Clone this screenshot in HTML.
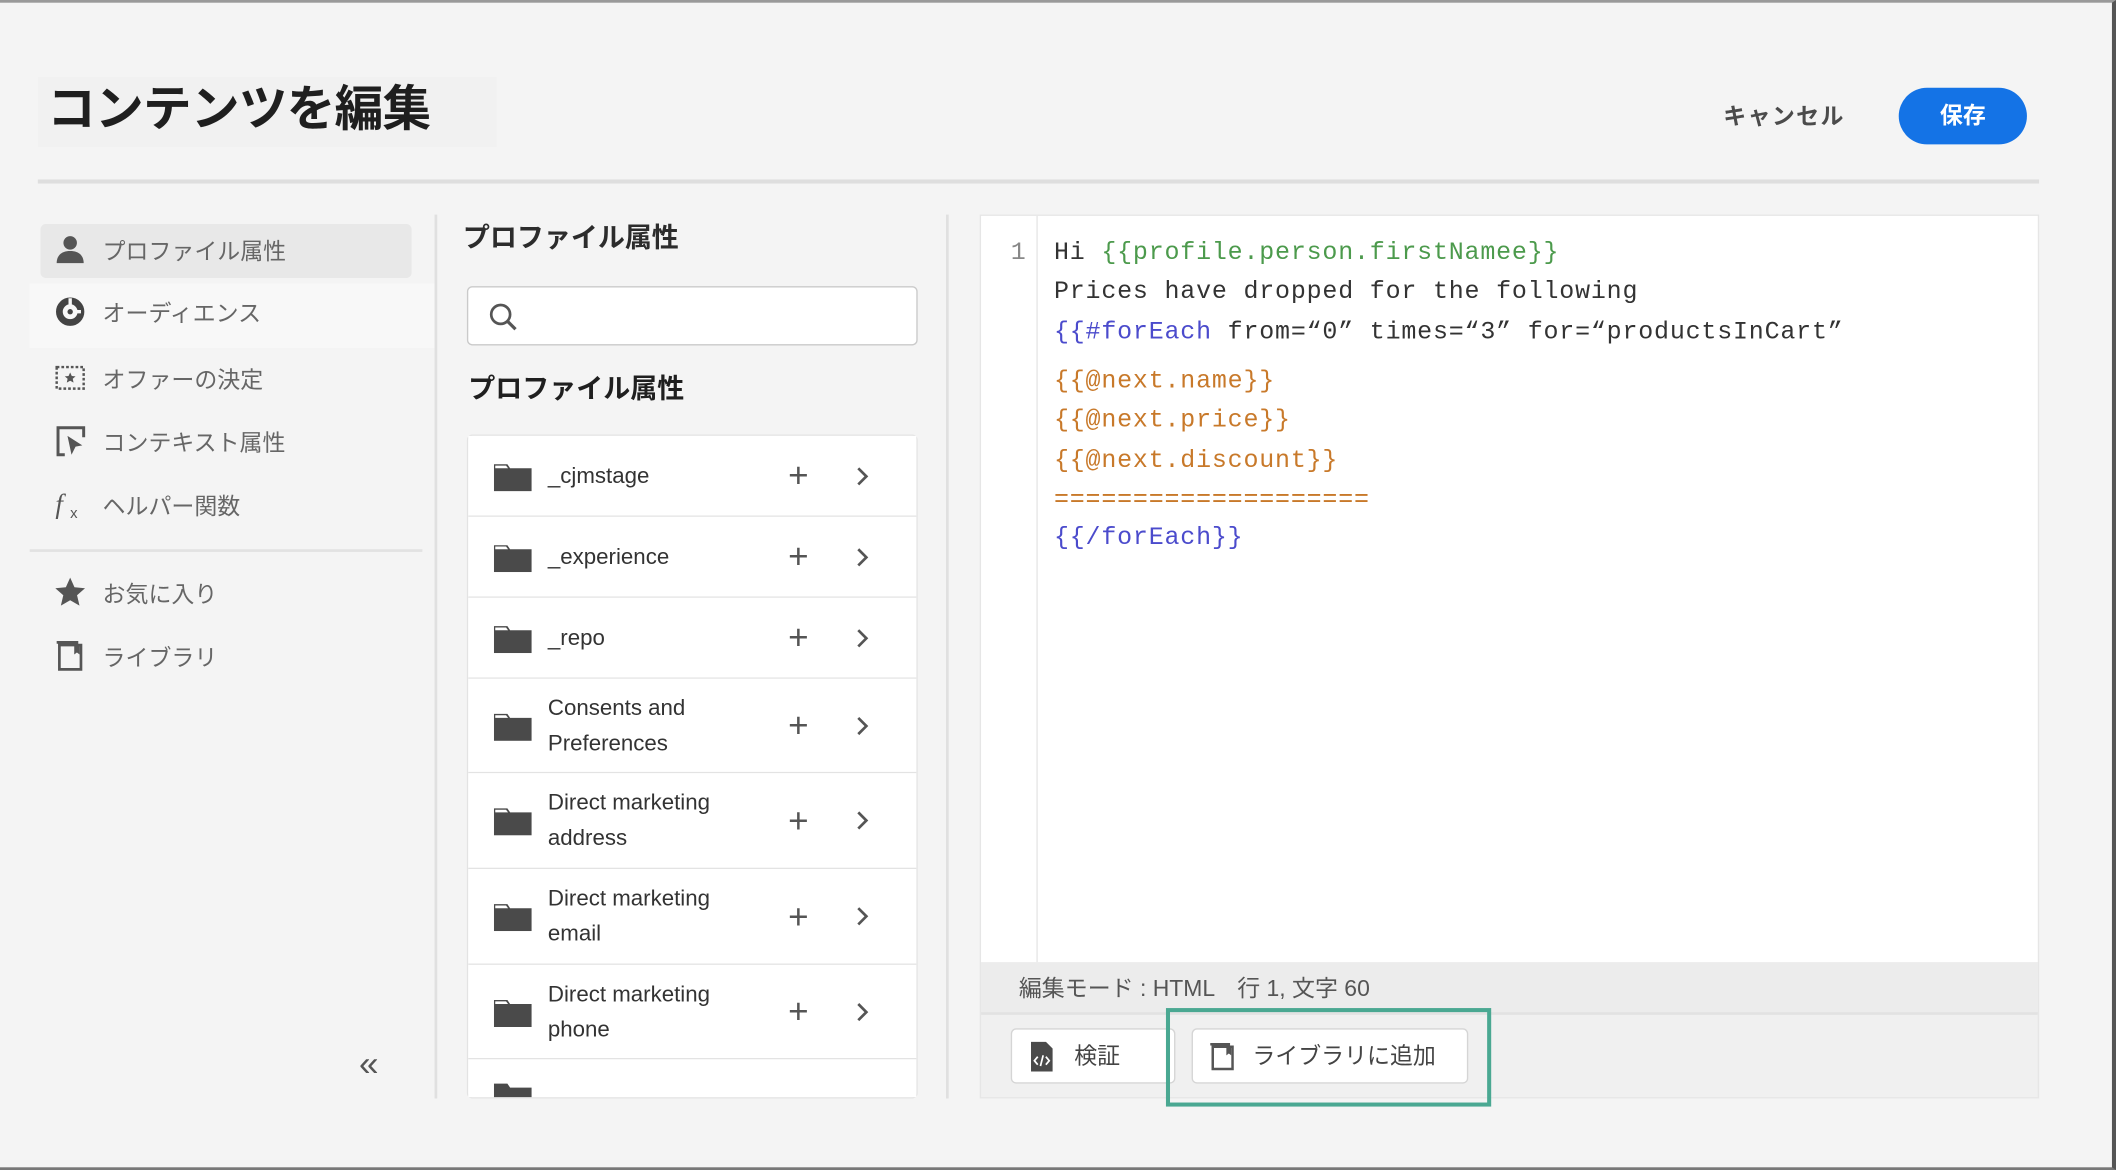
<!DOCTYPE html>
<html><head><meta charset="utf-8"><style>
*{box-sizing:border-box;margin:0;padding:0}
html,body{width:2116px;height:1170px;overflow:hidden;background:#f4f4f4}
#s{position:absolute;left:0;top:0;width:1568px;height:867px;transform:scale(1.34949,1.34948);transform-origin:0 0;font-family:"Liberation Sans","Noto Sans CJK JP",sans-serif;color:#333;border-top:2px solid #999;border-right:3px solid #555;border-bottom:2px solid #777;background:#f4f4f4}
.a{position:absolute}
.nav{position:absolute;left:40px;font-size:17px;color:#666;display:flex;align-items:center;gap:12px}
.nav svg{width:24px;height:24px}
.row{position:absolute;left:347px;width:332px;background:#fff;border-bottom:1.5px solid #e3e3e3;display:flex;align-items:center}
.row .fd{position:absolute;left:19px;width:28px;height:22px}
.row .t{position:absolute;left:59px;font-size:16.5px;line-height:26px;color:#333}
.row .p{position:absolute;left:237px;font-size:26px;color:#555;font-weight:300}
.row .c{position:absolute;left:287px;width:10px;height:16px}
.code{position:absolute;left:781px;font-family:"Liberation Mono","Noto Sans CJK JP",monospace;font-size:18.5px;color:#333;white-space:pre;letter-spacing:0.6px}
.g{color:#4c9a4c}.b{color:#4b4bcc}.o{color:#c8792a}
</style></head><body><div id="s">
<div class="a" style="left:28px;top:55px;width:340px;height:52px;background:#f1f1f1"></div>
<div class="a" style="left:35px;top:50px;font-size:36px;font-weight:bold;color:#1f1f1f;letter-spacing:-0.5px">コンテンツを編集</div>
<div class="a" style="left:1277px;top:70px;font-size:17px;font-weight:bold;color:#4b4b4b;letter-spacing:1px">キャンセル</div>
<div class="a" style="left:1407px;top:63px;width:95px;height:42px;border-radius:21px;background:#1473e6;color:#fff;font-weight:bold;font-size:17px;text-align:center;line-height:42px">保存</div>
<div class="a" style="left:28px;top:131px;width:1483px;height:3px;background:#dedede"></div>

<div class="a" style="left:30px;top:164px;width:275px;height:40px;background:#e8e8e8;border-radius:4px"></div>
<div class="a" style="left:22px;top:208px;width:300px;height:48px;background:#f8f8f8"></div>
<div class="nav" style="top:170px"><svg viewBox="0 0 24 24"><circle cx="12" cy="7" r="5" fill="#555"/><path d="M2 22c0-6 4-9 10-9s10 3 10 9z" fill="#555"/></svg>プロファイル属性</div>
<div class="nav" style="top:216px"><svg viewBox="0 0 24 24"><circle cx="12" cy="12" r="8" fill="none" stroke="#444" stroke-width="5"/><circle cx="12" cy="12" r="2" fill="#444"/><path d="M12 2v6M20 12h-5" stroke="#f8f8f8" stroke-width="2.5"/></svg>オーディエンス</div>
<div class="nav" style="top:265px"><svg viewBox="0 0 24 24"><rect x="2" y="4" width="20" height="16" fill="none" stroke="#555" stroke-width="1.8" stroke-dasharray="2 1.5"/><path d="M12 8l1.2 2.6 2.8.3-2.1 1.8.6 2.8-2.5-1.4-2.5 1.4.6-2.8-2.1-1.8 2.8-.3z" fill="#555"/></svg>オファーの決定</div>
<div class="nav" style="top:312px"><svg viewBox="0 0 24 24"><path d="M8 22H3V2h19v7" fill="none" stroke="#555" stroke-width="2.2"/><path d="M10 8l11 7-5 1-3 6z" fill="#555"/></svg>コンテキスト属性</div>
<div class="nav" style="top:359px"><svg viewBox="0 0 24 24"><text x="1" y="18" font-family="Liberation Serif,serif" font-style="italic" font-size="20" fill="#555">f</text><text x="12" y="22" font-family="Liberation Sans,sans-serif" font-size="11" fill="#555">x</text></svg>ヘルパー関数</div>
<div class="a" style="left:22px;top:405px;width:291px;height:2px;background:#e2e2e2"></div>
<div class="nav" style="top:424px"><svg viewBox="0 0 24 24"><path d="M12 1l3.2 7.2 7.8.7-5.9 5.2 1.8 7.7L12 17.8 5.1 21.8l1.8-7.7L1 8.9l7.8-.7z" fill="#555"/></svg>お気に入り</div>
<div class="nav" style="top:471px"><svg viewBox="0 0 24 24"><path d="M4 4h16v18H4z M2 2h16" fill="none" stroke="#555" stroke-width="2"/><path d="M15 4v7l2-1.5 2 1.5V4" fill="#555"/></svg>ライブラリ</div>
<div class="a" style="left:266px;top:771px;font-size:26px;color:#555">«</div>

<div class="a" style="left:322px;top:157px;width:2px;height:655px;background:#e0e0e0"></div>
<div class="a" style="left:701px;top:157px;width:2px;height:655px;background:#e0e0e0"></div>
<div class="a" style="left:343px;top:158px;font-size:20px;font-weight:bold;color:#2c2c2c">プロファイル属性</div>
<div class="a" style="left:346px;top:210px;width:334px;height:44px;background:#fff;border:1px solid #cacaca;border-radius:4px"><svg class="a" style="left:14px;top:10px" width="24" height="24" viewBox="0 0 24 24"><circle cx="10" cy="10" r="7" fill="none" stroke="#555" stroke-width="2"/><path d="M15 15l6 6" stroke="#555" stroke-width="2.4"/></svg></div>
<div class="a" style="left:347px;top:270px;font-size:20px;font-weight:bold;color:#1f1f1f">プロファイル属性</div>
<div class="a" style="left:346px;top:320px;width:334px;height:492px;background:#fff;border:1px solid #e3e3e3;border-radius:4px;overflow:hidden"></div>

<div class="row" style="top:321px;height:60px"><svg class="fd" viewBox="0 0 28 22"><path d="M0 2h10l2 3h16v17H0z" fill="#4a4a4a"/><path d="M1 3h8l1.5 2H1z" fill="#fff"/></svg><span class="t">_cjmstage</span><span class="p">+</span><svg class="c" viewBox="0 0 10 16"><path d="M2 2l6 6-6 6" fill="none" stroke="#555" stroke-width="2"/></svg></div>
<div class="row" style="top:381px;height:60px"><svg class="fd" viewBox="0 0 28 22"><path d="M0 2h10l2 3h16v17H0z" fill="#4a4a4a"/><path d="M1 3h8l1.5 2H1z" fill="#fff"/></svg><span class="t">_experience</span><span class="p">+</span><svg class="c" viewBox="0 0 10 16"><path d="M2 2l6 6-6 6" fill="none" stroke="#555" stroke-width="2"/></svg></div>
<div class="row" style="top:441px;height:60px"><svg class="fd" viewBox="0 0 28 22"><path d="M0 2h10l2 3h16v17H0z" fill="#4a4a4a"/><path d="M1 3h8l1.5 2H1z" fill="#fff"/></svg><span class="t">_repo</span><span class="p">+</span><svg class="c" viewBox="0 0 10 16"><path d="M2 2l6 6-6 6" fill="none" stroke="#555" stroke-width="2"/></svg></div>
<div class="row" style="top:501px;height:70px"><svg class="fd" viewBox="0 0 28 22"><path d="M0 2h10l2 3h16v17H0z" fill="#4a4a4a"/><path d="M1 3h8l1.5 2H1z" fill="#fff"/></svg><span class="t">Consents and<br>Preferences</span><span class="p">+</span><svg class="c" viewBox="0 0 10 16"><path d="M2 2l6 6-6 6" fill="none" stroke="#555" stroke-width="2"/></svg></div>
<div class="row" style="top:571px;height:71px"><svg class="fd" viewBox="0 0 28 22"><path d="M0 2h10l2 3h16v17H0z" fill="#4a4a4a"/><path d="M1 3h8l1.5 2H1z" fill="#fff"/></svg><span class="t">Direct marketing<br>address</span><span class="p">+</span><svg class="c" viewBox="0 0 10 16"><path d="M2 2l6 6-6 6" fill="none" stroke="#555" stroke-width="2"/></svg></div>
<div class="row" style="top:642px;height:71px"><svg class="fd" viewBox="0 0 28 22"><path d="M0 2h10l2 3h16v17H0z" fill="#4a4a4a"/><path d="M1 3h8l1.5 2H1z" fill="#fff"/></svg><span class="t">Direct marketing<br>email</span><span class="p">+</span><svg class="c" viewBox="0 0 10 16"><path d="M2 2l6 6-6 6" fill="none" stroke="#555" stroke-width="2"/></svg></div>
<div class="row" style="top:713px;height:70px"><svg class="fd" viewBox="0 0 28 22"><path d="M0 2h10l2 3h16v17H0z" fill="#4a4a4a"/><path d="M1 3h8l1.5 2H1z" fill="#fff"/></svg><span class="t">Direct marketing<br>phone</span><span class="p">+</span><svg class="c" viewBox="0 0 10 16"><path d="M2 2l6 6-6 6" fill="none" stroke="#555" stroke-width="2"/></svg></div>
<div class="row" style="top:783px;height:28px;border:none;overflow:hidden;align-items:flex-start"><svg class="fd" style="top:16px" viewBox="0 0 28 22"><path d="M0 2h10l2 3h16v17H0z" fill="#4a4a4a"/></svg></div>

<div class="a" style="left:726px;top:157px;width:785px;height:655px;background:#f0f0f0;border:1px solid #e6e6e6"></div>
<div class="a" style="left:727px;top:158px;width:783px;height:553px;background:#fff"></div>
<div class="a" style="left:768px;top:158px;width:1px;height:553px;background:#e6e6e6"></div>
<div class="code" style="left:749px;top:175px;color:#888">1</div>
<div class="code" style="top:175px">Hi <span class="g">{{profile.person.firstNamee}}</span></div>
<div class="code" style="top:204px">Prices have dropped for the following</div>
<div class="code" style="top:234px"><span class="b">{{#forEach</span> from=“0” times=“3” for=“productsInCart”</div>
<div class="code o" style="top:270px">{{@next.name}}</div>
<div class="code o" style="top:299px">{{@next.price}}</div>
<div class="code o" style="top:329px">{{@next.discount}}</div>
<div class="code o" style="top:358px">====================</div>
<div class="code b" style="top:386px">{{/forEach}}</div>
<div class="a" style="left:727px;top:711px;width:783px;height:37px;background:#ececec"></div>
<div class="a" style="left:755px;top:716px;font-size:17px;color:#555">編集モード : HTML　行 1, 文字 60</div>
<div class="a" style="left:727px;top:748px;width:783px;height:2px;background:#e2e2e2"></div>
<div class="a" style="left:749px;top:760px;width:122px;height:41px;background:#fff;border:1px solid #d5d5d5;border-radius:4px;font-size:17px;color:#444;line-height:39px;padding-left:46px">検証<svg class="a" style="left:12px;top:9px" width="20" height="22" viewBox="0 0 20 22"><path d="M2 0h11l5 5v17H2z" fill="#4a4a4a"/><path d="M7 11l-2.5 3L7 17M13 11l2.5 3L13 17M11 10l-2 8" stroke="#fff" stroke-width="1.3" fill="none"/></svg></div>
<div class="a" style="left:883px;top:760px;width:205px;height:41px;background:#fff;border:1px solid #d5d5d5;border-radius:4px;font-size:17px;color:#444;line-height:39px;padding-left:44px">ライブラリに追加<svg class="a" style="left:11px;top:9px" width="22" height="22" viewBox="0 0 24 24"><path d="M4 4h16v18H4z M2 2h16" fill="none" stroke="#555" stroke-width="2"/><path d="M15 4v7l2-1.5 2 1.5V4" fill="#555"/></svg></div>
<div class="a" style="left:864px;top:745px;width:241px;height:73px;border:3px solid #4aa892"></div>
</div></body></html>
